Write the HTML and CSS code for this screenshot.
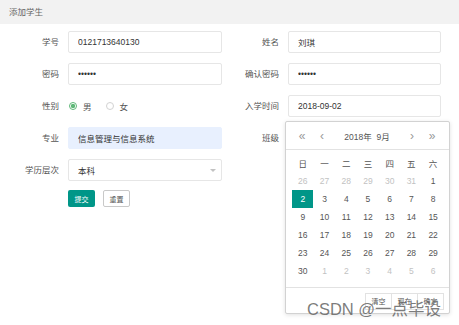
FILE: index.html
```html
<!DOCTYPE html>
<html lang="zh-CN">
<head>
    <meta charset="UTF-8">
    <title>添加学生</title>
    <link rel="stylesheet" href="styles.css">
</head>
<body>
    <div class="panel-title">添加学生</div>
    <form class="student-form">
        <label class="form-label">学号</label>
        <div class="field"><input type="text" class="form-input" value="0121713640130"></div>
        <label class="form-label">姓名</label>
        <div class="field"><input type="text" class="form-input" value="刘琪"></div>

        <label class="form-label">密码</label>
        <div class="field"><input type="password" class="form-input" value="123456"></div>
        <label class="form-label">确认密码</label>
        <div class="field"><input type="password" class="form-input" value="123456"></div>

        <label class="form-label">性别</label>
        <div class="field radio-group">
            <span class="radio checked"><i class="radio-icon"></i>男</span>
            <span class="radio"><i class="radio-icon"></i>女</span>
        </div>
        <label class="form-label">入学时间</label>
        <div class="field date-field">
            <input type="text" class="form-input" value="2018-09-02">
            <div class="laydate">
                <div class="laydate-head">
                    <span class="nav">&#171;</span>
                    <span class="nav">&#8249;</span>
                    <span class="ym">2018年&nbsp; 9月</span>
                    <span class="nav">&#8250;</span>
                    <span class="nav">&#187;</span>
                </div>
                <table class="laydate-table">
                    <thead>
                        <tr><th>日</th><th>一</th><th>二</th><th>三</th><th>四</th><th>五</th><th>六</th></tr>
                    </thead>
                    <tbody id="days"></tbody>
                </table>
                <div class="laydate-foot">
                    <span class="foot-btn">清空</span><span class="foot-btn">现在</span><span class="foot-btn">确定</span>
                </div>
            </div>
        </div>

        <label class="form-label">专业</label>
        <div class="field"><input type="text" class="form-input autofill" value="信息管理与信息系统"></div>
        <label class="form-label">班级</label>
        <div class="field"><input type="text" class="form-input"></div>

        <label class="form-label">学历层次</label>
        <div class="field select"><input type="text" class="form-input" value="本科" readonly><i class="caret"></i></div>
        <span></span><span></span>

        <span></span>
        <div class="actions">
            <button type="button" class="btn">提交</button>
            <button type="button" class="btn btn-primary">重置</button>
        </div>
    </form>
    <div class="watermark">CSDN @一点毕设</div>

    <script>
        // 2018年9月, 1号是星期六
        const tbody = document.getElementById('days');
        const cells = [];
        for (let d = 26; d <= 31; d++) cells.push({ n: d, other: true });
        for (let d = 1; d <= 30; d++) cells.push({ n: d });
        for (let d = 1; cells.length < 42; d++) cells.push({ n: d, other: true });

        for (let r = 0; r < 6; r++) {
            const tr = document.createElement('tr');
            for (let c = 0; c < 7; c++) {
                const cell = cells[r * 7 + c];
                const td = document.createElement('td');
                if (cell.other) td.className = 'other';
                if (!cell.other && cell.n === 2) td.className = 'this';
                td.innerHTML = '<span>' + cell.n + '</span>';
                tr.appendChild(td);
            }
            tbody.appendChild(tr);
        }
    </script>
</body>
</html>
```

FILE: styles.css
```css
html, body {
    margin: 0;
    min-height: 100vh;
}
body {
    font-family: "Liberation Sans", "Noto Sans CJK SC", sans-serif;
    font-size: 8.5px;
    color: #666;
    background: #fff;
}
.panel-title {
    height: 24px;
    line-height: 24px;
    padding-left: 9px;
    background-color: #f2f2f2;
    color: #666;
}
.student-form {
    display: grid;
    grid-template-columns: 68px 154px 66px 153px;
    grid-auto-rows: 22px;
    row-gap: 10px;
    padding-top: 7px;
}
.form-label {
    padding-right: 9px;
    text-align: right;
    line-height: 22px;
    color: #555;
}
.field {
    position: relative;
}
.form-input {
    box-sizing: border-box;
    width: 100%;
    height: 22px;
    padding: 0 9px;
    border: 1px solid #e6e6e6;
    border-radius: 2px;
    font-family: inherit;
    font-size: 8.5px;
    color: #333;
    background: #fff;
    outline: none;
}
.autofill {
    background-color: #e8f0fe;
    border-color: #e8f0fe;
}
.radio-group {
    display: flex;
    align-items: center;
    gap: 14px;
    padding-left: 1px;
    color: #555;
}
.radio {
    display: flex;
    align-items: center;
}
.radio-icon {
    box-sizing: border-box;
    width: 8px;
    height: 8px;
    margin-right: 6px;
    border: 1px solid #d2d2d2;
    border-radius: 50%;
}
.radio.checked .radio-icon {
    border-color: #5fb878;
    background: radial-gradient(circle, #5fb878 0 2px, #fff 2.3px);
}
.caret {
    position: absolute;
    right: 6px;
    top: 10px;
    border-left: 3.5px solid transparent;
    border-right: 3.5px solid transparent;
    border-top: 3.5px solid #c2c2c2;
}
.actions {
    display: flex;
    gap: 8px;
    margin-top: -1px;
}
.btn {
    box-sizing: border-box;
    width: 27px;
    height: 17px;
    padding: 0;
    border: none;
    border-radius: 2px;
    background-color: #009688;
    color: #fff;
    font-family: inherit;
    font-size: 7px;
}
.btn-primary {
    border: 1px solid #c9c9c9;
    background-color: #fff;
    color: #555;
}

/* 日期选择弹层 */
.laydate {
    position: absolute;
    top: 26px;
    left: -3px;
    z-index: 10;
    box-sizing: border-box;
    width: 165px;
    border: 1px solid #d2d2d2;
    border-radius: 2px;
    background: #fff;
    box-shadow: 0 1px 4px rgba(0, 0, 0, 0.12);
}
.laydate-head {
    display: flex;
    align-items: center;
    height: 27px;
    padding: 0 7px 0 6px;
    border-bottom: 1px solid #e2e2e2;
    color: #999;
}
.laydate-head .nav {
    font-size: 12px;
    width: 20px;
    text-align: center;
    line-height: 1;
}
.laydate-head .ym {
    flex: 1;
    text-align: center;
    color: #555;
}
.laydate-table {
    border-collapse: collapse;
    margin: 4px 5px 7px 6px;
}
.laydate-table th,
.laydate-table td {
    width: 22px;
    height: 18px;
    padding: 0;
    text-align: center;
    font-weight: normal;
    color: #555;
}
.laydate-table td span {
    display: inline-block;
    width: 21px;
    line-height: 18px;
}
.laydate-table td.other {
    color: #c2c2c2;
}
.laydate-table td.this span {
    background-color: #009688;
    color: #fff;
}
.laydate-foot {
    display: flex;
    justify-content: flex-end;
    height: 26px;
    padding: 5px 5px 0 0;
    box-sizing: border-box;
    border-top: 1px solid #e2e2e2;
}
.foot-btn {
    box-sizing: border-box;
    width: 27px;
    height: 17px;
    line-height: 15px;
    margin-left: -1px;
    border: 1px solid #e2e2e2;
    text-align: center;
    font-size: 7px;
    color: #555;
    background: #fff;
}
.watermark {
    position: absolute;
    left: 307px;
    top: 296px;
    z-index: 20;
    font-size: 16.5px;
    color: rgba(100, 100, 100, 0.85);
    white-space: nowrap;
}
```
